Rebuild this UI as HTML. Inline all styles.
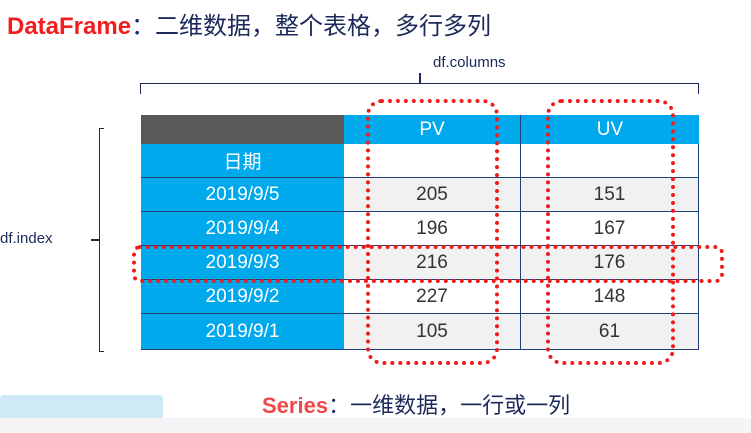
<!DOCTYPE html>
<html><head><meta charset="utf-8"><style>
body{margin:0;width:751px;height:433px;overflow:hidden;background:#fff;position:relative;font-family:"Liberation Sans","Noto Sans CJK SC",sans-serif}
.a{position:absolute}
.c{position:absolute;display:flex;align-items:center;justify-content:center;font-size:19px;box-sizing:border-box}
.ix{background:#00a8ec;color:#fff;left:141px;width:203px;border-bottom:1px solid #1f3f7a}
.v{color:#333;border-bottom:1px solid #1f3f7a;border-right:1px solid #1f3f7a}
.dot{position:absolute;border:4px dotted #f01c1c;border-radius:16px;box-sizing:border-box}
</style></head><body>
<div class="a" style="left:0;top:418px;width:751px;height:15px;background:#f5f5f7"></div>
<div class="a" style="left:0;top:395px;width:163px;height:23px;background:#cfeaf6;border-radius:3px 3px 0 0"></div>
<div class="a" style="left:7px;top:6px;font-size:24px;color:#1b2a5a;white-space:nowrap"><b style="color:#f41c1c">DataFrame</b>：二维数据，整个表格，多行多列</div>
<div class="a" style="left:433px;top:54px;font-size:15px;color:#1b2a5a">df.columns</div>
<div class="a" style="left:140px;top:83px;width:557px;height:10px;border:1.5px solid #1b2a5a;border-bottom:none"></div>
<div class="a" style="left:419px;top:73px;width:1.5px;height:11px;background:#1b2a5a"></div>
<div class="a" style="left:0;top:230px;font-size:15px;color:#1b2a5a">df.index</div>
<div class="a" style="left:99px;top:128px;width:4px;height:222px;border:1.5px solid #1b2a5a;border-right:none"></div>
<div class="a" style="left:91px;top:239px;width:9px;height:1.5px;background:#1b2a5a"></div>
<div class="a" style="left:141px;top:115px;width:558px;height:235px;border:1px solid #1f3f7a;box-sizing:border-box"></div>
<div class="c" style="left:141px;top:115px;width:203px;height:29px;background:#595959"></div>
<div class="c" style="left:344px;top:115px;width:177px;height:29px;background:#00a8ec;color:#fff;border-right:1px solid #1f3f7a">PV</div>
<div class="c" style="left:521px;top:115px;width:178px;height:29px;background:#00a8ec;color:#fff">UV</div>
<div class="c ix" style="top:144px;height:34px">日期</div>
<div class="c v" style="left:344px;top:144px;width:177px;height:34px"></div>
<div class="c v" style="left:521px;top:144px;width:178px;height:34px"></div>
<div class="c ix" style="top:178px;height:34px">2019/9/5</div>
<div class="c v" style="left:344px;top:178px;width:177px;height:34px;background:#f1f1f1">205</div>
<div class="c v" style="left:521px;top:178px;width:178px;height:34px;background:#f1f1f1">151</div>
<div class="c ix" style="top:212px;height:34px">2019/9/4</div>
<div class="c v" style="left:344px;top:212px;width:177px;height:34px">196</div>
<div class="c v" style="left:521px;top:212px;width:178px;height:34px">167</div>
<div class="c ix" style="top:246px;height:34px">2019/9/3</div>
<div class="c v" style="left:344px;top:246px;width:177px;height:34px;background:#f1f1f1">216</div>
<div class="c v" style="left:521px;top:246px;width:178px;height:34px;background:#f1f1f1">176</div>
<div class="c ix" style="top:280px;height:34px">2019/9/2</div>
<div class="c v" style="left:344px;top:280px;width:177px;height:34px">227</div>
<div class="c v" style="left:521px;top:280px;width:178px;height:34px">148</div>
<div class="c ix" style="top:314px;height:36px">2019/9/1</div>
<div class="c v" style="left:344px;top:314px;width:177px;height:36px;background:#f1f1f1">105</div>
<div class="c v" style="left:521px;top:314px;width:178px;height:36px;background:#f1f1f1">61</div>
<div class="dot" style="left:366px;top:99px;width:133px;height:266px"></div>
<div class="dot" style="left:546px;top:99px;width:129px;height:266px"></div>
<div class="dot" style="left:132px;top:245px;width:592px;height:38px;border-radius:8px"></div>
<div class="a" style="left:262px;top:388px;font-size:22px;color:#1b2a5a;white-space:nowrap"><b style="color:#f04848">Series</b>：一维数据，一行或一列</div>
</body></html>
